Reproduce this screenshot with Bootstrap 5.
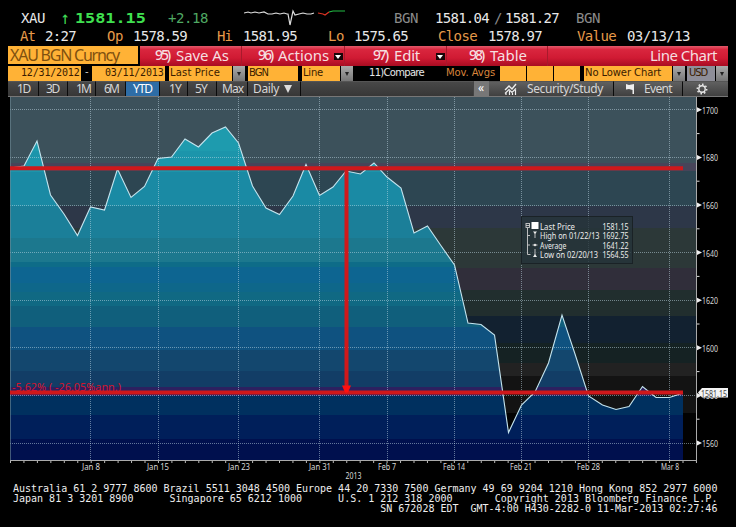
<!DOCTYPE html>
<html lang="en">
<head>
<meta charset="utf-8">
<title>XAU BGN Curncy - Line Chart</title>
<link href="https://cdn.jsdelivr.net/npm/bootstrap@5.3.0/dist/css/bootstrap.min.css" rel="stylesheet">
<style>
body{background:#000;color:#e8e8e8;font-family:"Noto Sans","DejaVu Sans",sans-serif;line-height:1;width:736px;height:527px}
.screen{width:736px;height:527px}
.line-row{display:grid;align-items:center;white-space:nowrap;line-height:1}
.line-row span{white-space:pre}
.line-row>*{justify-self:start}
.mono{font-family:"DejaVu Sans Mono","Liberation Mono",monospace;font-size:14px}
.quote1{grid-template-columns:21px 40px 14px 93px 76px 150px 41px 59px 11px 71px 60px;height:17px;margin-top:9px}
.quote2{grid-template-columns:20px 25px 62px 26px 84px 26px 85px 26px 84px 50px 89px 50px 109px;height:19px}
.amber{color:#e69a4a}
.dimmed{color:#8b8b8b}
.up{color:#3fd854;transform:scale(1.1,1.25)}
.up2{color:#4fa863}
.price{color:#3fe050;font-weight:bold;font-size:14px;transform-origin:0 50%;transform:scaleX(1.2)}
.redbar{height:20px;margin-top:1px;padding-left:8px;width:728px}
.security{width:130px;background:#ffb236;color:#80500f;font-size:16px;height:18px;line-height:19px;padding-left:2px;margin-right:2px;overflow:hidden}
.cmd{height:20px;background:linear-gradient(#e2596a 0,#d9263e 18%,#d01a33 60%,#a80c22 100%);border-right:1px solid #a81a2c;font-size:15px;color:#f6dfe0;display:grid;align-items:center;padding-bottom:2px}
.cmd>*{justify-self:start}
.cmd .num{font-size:14px;font-weight:500}
.c1{width:102px;grid-template-columns:15px 21px 66px}
.c2{width:103px;grid-template-columns:16px 20px 56px 10px}
.c3{width:102px;grid-template-columns:28px 21px 42px 10px}
.c4{width:101px;grid-template-columns:22px 21px 58px}
.c5{width:180px;grid-template-columns:102px 78px;border:0}
.drop{width:9px;height:7px;background:#1a0508;position:relative;top:1px}
.drop::after{content:"";position:absolute;left:1px;top:2px;border:3.5px solid transparent;border-top:4px solid #fff;border-bottom:0}
.fields{height:15px;padding-left:8px;font-family:"DejaVu Sans",sans-serif;font-size:10px}
.field{background:#ffb236;color:#3a1c00;height:15px;line-height:13px;white-space:nowrap}
.field.date{font-family:"DejaVu Sans Mono",monospace}
.arrowbtn{height:15px;width:12px;background:linear-gradient(#aaa,#777);display:flex;align-items:center;justify-content:center}
.arrowbtn::after{content:"";border:2.5px solid transparent;border-top:4px solid #222;border-bottom:0}
.w-date{width:73px;padding-left:13px}
.w-dash{width:11px;padding:1px 0 0 4px;color:#ccc}
.w-lp{width:63px;margin-left:4px;margin-right:1px;padding-left:1px}
.w-bgn{width:50px;margin-left:3px;padding-left:1px}
.w-line{width:38px;margin:0 1px 0 4px;padding-left:1px}
.w-cmp{width:93px;padding:2px 0 0 16px}
.w-mov{width:54px;color:#d9853c;padding-top:2px}
.w-avg{width:26px;margin-right:1px}
.w-lower{width:88px;margin:0 1px 0 3px;padding-left:1px}
.w-usd{width:28px;margin:0 1px 0 2px;padding-left:2px;background:#8e8e98}
.tabs{height:15px;margin-left:8px;width:720px;background:linear-gradient(#494949,#373737);font-size:12px;color:#d6d6d6}
.tab{height:15px;border-right:1px solid #0b0b0b;border-top:1px solid #555;line-height:14px;display:flex;white-space:nowrap}
.tab.active-range{background:#2e6da6;color:#fff}
.tools{background:linear-gradient(#606060,#404040)}
.t0{width:31px;padding-left:9px}.t1{width:29px;padding-left:7px}.t2{width:28px;padding-left:8px}
.t3{width:30px;padding-left:8px}.t4{width:34px;padding-left:7px}.t5{width:28px;padding-left:9px}
.t6{width:29px;padding-left:7px}.t7{width:31px;padding-left:5px}.t8{width:53px;padding-left:5px}
.t9{width:173px;border-right-color:#444}
.t10{width:15px;padding-left:4px;background:#777;border:0;color:#fff}
.t11{width:125px;padding-left:15px}.t12{width:69px;padding-left:11px}.t13{width:45px;padding-left:13px;border-right:0}
.chart{display:block;font-family:"Noto Sans",sans-serif}
.contacts{font-family:"DejaVu Sans Mono","Liberation Mono",monospace;font-size:10px;line-height:10px;margin:2px 0 0;padding-left:13px;color:#eee;overflow:hidden;white-space:pre}
</style>
</head>
<body>
<main class="screen d-flex flex-column overflow-hidden">
  <div class="line-row quote1 mono">
    <i></i><span data-w="24">XAU</span><span class="up">↑</span><span class="price">1581.15</span><span class="up2" data-w="40">+2.18</span>
    <svg width="104" height="17" viewBox="244 9 104 17" fill="none" stroke-width="1.2"><path stroke="#ddd" d="M244 13l4-1 3 1 4-1 4 1 5-1 4 2 4 0 4-1 4 1 4-1 3 1 1 0 2 11 3-14 2 4 4-1 4-1 4 1 4 0 3-1"/><path stroke="#d32" d="M318 13l5 1 2 1 4-3"/><path stroke="#2b4" d="M329 12l4-1h12"/></svg>
    <span class="dimmed" data-w="24">BGN</span><span data-w="54">1581.04</span><span class="dimmed">/</span><span data-w="54">1581.27</span><span class="dimmed" data-w="24">BGN</span>
  </div>
  <div class="line-row quote2 mono">
    <i></i><span class="amber" data-w="15">At</span><span data-w="31">2:27</span><span class="amber" data-w="16">Op</span><span data-w="54">1578.59</span><span class="amber" data-w="15">Hi</span><span data-w="54">1581.95</span><span class="amber" data-w="16">Lo</span><span data-w="54">1575.65</span><span class="amber" data-w="39">Close</span><span data-w="54">1578.97</span><span class="amber" data-w="39">Value</span><span data-w="63">03/13/13</span>
  </div>
  <div class="redbar d-flex align-items-start">
    <div class="security"><span data-w="109">XAU BGN Curncy</span></div>
    <div class="cmd c1"><i></i><span class="num" data-w="14">95)</span><span data-w="53">Save As</span></div>
    <div class="cmd c2"><i></i><span class="num" data-w="14">96)</span><span data-w="51">Actions</span><b class="drop"></b></div>
    <div class="cmd c3"><i></i><span class="num" data-w="14">97)</span><span data-w="26">Edit</span><b class="drop"></b></div>
    <div class="cmd c4"><i></i><span class="num" data-w="14">98)</span><span data-w="37">Table</span></div>
    <div class="cmd c5"><i></i><span data-w="67">Line Chart</span></div>
  </div>
  <div class="fields d-flex align-items-start">
    <div class="field date w-date"><span data-w="58.5">12/31/2012</span></div><div class="w-dash">-</div>
    <div class="field date w-date"><span data-w="58.5">03/11/2013</span></div>
    <div class="field w-lp"><span data-w="50">Last Price</span></div><div class="arrowbtn"></div>
    <div class="field w-bgn"><span data-w="19">BGN</span></div>
    <div class="field w-line"><span data-w="20">Line</span></div><div class="arrowbtn"></div>
    <div class="w-cmp"><span data-w="55">11)Compare</span></div><div class="w-mov"><span data-w="49">Mov. Avgs</span></div>
    <div class="field w-avg"></div><div class="field w-avg"></div><div class="field w-avg"></div>
    <div class="field w-lower"><span data-w="76">No Lower Chart</span></div><div class="arrowbtn"></div>
    <div class="field w-usd"><span data-w="18">USD</span></div><div class="arrowbtn"></div>
  </div>
  <div class="tabs d-flex">
    <div class="tab t0"><span data-w="13">1D</span></div><div class="tab t1"><span data-w="13">3D</span></div><div class="tab t2"><span data-w="14">1M</span></div><div class="tab t3"><span data-w="14">6M</span></div>
    <div class="tab t4 active-range"><span data-w="19">YTD</span></div><div class="tab t5"><span data-w="12">1Y</span></div><div class="tab t6"><span data-w="12">5Y</span></div><div class="tab t7"><span data-w="21">Max</span></div>
    <div class="tab t8"><span data-w="26">Daily</span><svg class="ms-1" width="9" height="13"><path d="M1 3h8l-4 8z" fill="#ddd"/></svg></div>
    <div class="tab t9"></div><div class="tab t10">«</div>
    <div class="tab t11 tools"><svg width="23" height="14" fill="none" stroke="#eee"><path d="M1 8l4-4 3 3 4-5" stroke-width="1.4"/><path d="M1 11.500l4-4 3 3 4-4M2 13v-2M5.500 13V9M8.500 13v-2M11.500 13V8" stroke-width="1.2"/></svg><span data-w="76">Security/Study</span></div>
    <div class="tab t12 tools"><svg width="19" height="14"><path d="M1 2l3 1 5-1v10H7.500V8L4 7 1 7.500z" fill="#eee"/></svg><span data-w="28">Event</span></div>
    <div class="tab t13 tools"><svg width="12" height="14" viewBox="0 0 12 14" fill="none" stroke="#e6e6e6"><circle cx="6" cy="7" r="3.2" stroke-width="1.4"/><path stroke-width="1.5" stroke-dasharray="1.6 2" d="M6 2.3a4.7 4.7 0 1 1 0 9.4a4.7 4.7 0 1 1 0-9.4"/></svg></div>
  </div>
  <svg class="chart" id="chart" width="736" height="386" viewBox="0 96 736 386"></svg>
  <pre class="contacts">Australia 61 2 9777 8600 Brazil 5511 3048 4500 Europe 44 20 7330 7500 Germany 49 69 9204 1210 Hong Kong 852 2977 6000
Japan 81 3 3201 8900      Singapore 65 6212 1000      U.S. 1 212 318 2000       Copyright 2013 Bloomberg Finance L.P.
                                                             SN 672028 EDT  GMT-4:00 H430-2282-0 11-Mar-2013 02:27:46</pre>
</main>
<script src="https://cdn.jsdelivr.net/npm/bootstrap@5.3.0/dist/js/bootstrap.bundle.min.js"></script>
<script>
// Price series as plot coordinates, one entry per trading day
const pts=[[10,168],[24,166],[37,141],[50.5,195],[64,214],[77.5,235.5],[90.5,207],[104.5,210],[117.5,169],[131,197.5],[144.5,186.5],[158,158.5],[171.5,157],[185,139],[198.5,147],[212,133],[225.5,127],[238.5,143],[252.5,186],[266,208],[279.5,214.5],[293,196],[306,164.5],[319.5,195.5],[333,187],[346,171],[360.5,174],[374,163],[387,177],[401,188],[414,233],[427.5,226],[440.5,245],[454.5,265],[468,323],[481,324.5],[494.5,335],[508.5,432.5],[521.5,405],[535,392],[548.5,363],[562,315],[575,354],[588.5,396],[602.5,405],[616,409.5],[629,406.5],[642.5,386.5],[656,397.5],[669.5,397.5],[683,393]];
// [top, colour] bands of backdrop and of the filled area
const back=[[97,'#3c515b'],[163,'#474459'],[171,'#2d4652'],[206,'#2d3748'],[228,'#2c3838'],[268,'#302e3a'],[290,'#212e2e'],[316,'#122130'],[343,'#152223'],[363,'#222222'],[376,'#131313'],[413,'#020202'],[461]];
const fill=[[97,'#1e9bae'],[151,'#1c95ab'],[172,'#1a8aa4'],[206,'#1b7f99'],[238,'#1c788e'],[262,'#0e6c88'],[267,'#0d6591'],[283,'#0e678a'],[292,'#106983'],[306,'#105f7c'],[327,'#0f5280'],[350,'#13476e'],[371,'#123d66'],[387,'#2c2060'],[396,'#00305f'],[415,'#001f5a'],[439,'#00104e'],[461]];
const bands=a=>a.slice(0,-1).map((b,i)=>`<rect x="10" y="${b[0]}" width="687" height="${a[i+1][0]-b[0]}" fill="${b[1]}"/>`).join('');
const line=pts.map(p=>p.join()).join(' ');
const t=(x,y,s,w,f='#d8d8d8',z=9)=>`<text x="${x}" y="${y}" font-size="${z}" fill="${f}" textLength="${w}" lengthAdjust="spacingAndGlyphs">${s}</text>`;
let g=`<rect x="8" y="96" width="720" height="1" fill="#777"/><defs><clipPath id="under"><polygon points="10,461 ${line} 683,461"/></clipPath></defs>${bands(back)}<g clip-path="url(#under)">${bands(fill)}</g>`;
g+='<g stroke="#c3dce8" stroke-opacity=".5" stroke-dasharray="1 1">';
[109.5,157.5,205,252.5,300,347.5,395.5,443].forEach(y=>g+=`<path d="M10 ${Math.floor(y)+.5}H697"/>`);
[90.5,158.5,238.5,319.5,387.5,454.5,521.5,588.5,669.5].forEach(x=>g+=`<path d="M${x} 97V461"/>`);
g+=`</g><polyline points="${line}" fill="none" stroke="#c4e4ee" stroke-width="1.1"/>`;
g+='<path d="M10.5 97V461" stroke="#6c8894" stroke-opacity=".6"/><path d="M10 460.5H697M696.500 97V461" stroke="#aaa" fill="none"/>';
for(let i=0;i<52;i++)g+=`<path d="M${10.5+i*13.45} 461v2" stroke="#bbb"/>`;
[1700,1680,1660,1640,1620,1600,1580,1560].forEach((v,i)=>{const y=109.8+i*47.6;g+=`<path d="M697 ${y-2.5}l5 2.5-5 2.5z" fill="#eee"/>`+t(702,y+4,v,16);if(i<7)g+=`<path d="M697 ${y+23.8}h2.5" stroke="#ddd"/>`});
g+='<g stroke="#d0181b" stroke-width="4"><path d="M10 168.2H683M10 392.5H683"/><path d="M346.5 169V386"/></g><path d="M342 385.5h9l-3 7h-3z" fill="#ff1010"/>';
g+=t(12,391,'-5.62% ( -26.05%ann.)',109,'#d4142e',11);
g+='<path d="M698 392.5l4-4.5h26v9.5h-26z" fill="#f4f4f4"/>'+t(701,396.5,'1581.15',26,'#444');
[[82,'Jan 8',18],[147,'Jan 15',22],[228,'Jan 23',22],[309,'Jan 31',22],[378,'Feb 7',18],[443,'Feb 14',22],[510,'Feb 21',22],[577,'Feb 28',23],[661,'Mar 8',18]].forEach(a=>g+=t(a[0],470,a[1],a[2]));
g+=t(345.5,479,'2013',16);
g+='<rect x="521.5" y="216.5" width="111" height="47" fill="#26333a" fill-opacity=".8" stroke="#1a2226"/>';
[['Last Price',35,'1581.15'],['High on 01/22/13',59.5,'1692.75'],['Average',26.5,'1641.22'],['Low on 02/20/13',58,'1564.55']].forEach((r,i)=>{const y=229.5+i*9.6;g+=t(540,y,r[0],r[1],'#ececec',8.5)+t(602.5,y,r[2],26,'#ececec',8.5)});
g+='<g stroke="#ccc" fill="none" stroke-width=".9"><rect x="526" y="223.5" width="3.5" height="4"/><path d="M526 225.5h4M527.5 228v26.5h3M527.5 235.5h2.5M527.5 245h2.5M535 232v6M532.5 245h5M535 249v6"/></g><rect x="531.5" y="222" width="7" height="7" fill="#fff"/><path d="M533 231.5h4l-2 2.5zM533 257h4l-2-3zM533.500 245l1.500-1.500 1.500 1.500-1.500 1.500z" fill="#eee"/>';
document.getElementById('chart').innerHTML=g;
// Track each label so that it fills the width given in data-w
document.querySelectorAll('[data-w]').forEach(e=>{const w=e.getBoundingClientRect().width;e.style.letterSpacing=((+e.dataset.w-w)/e.textContent.length)+'px'});
</script>
</body>
</html>
